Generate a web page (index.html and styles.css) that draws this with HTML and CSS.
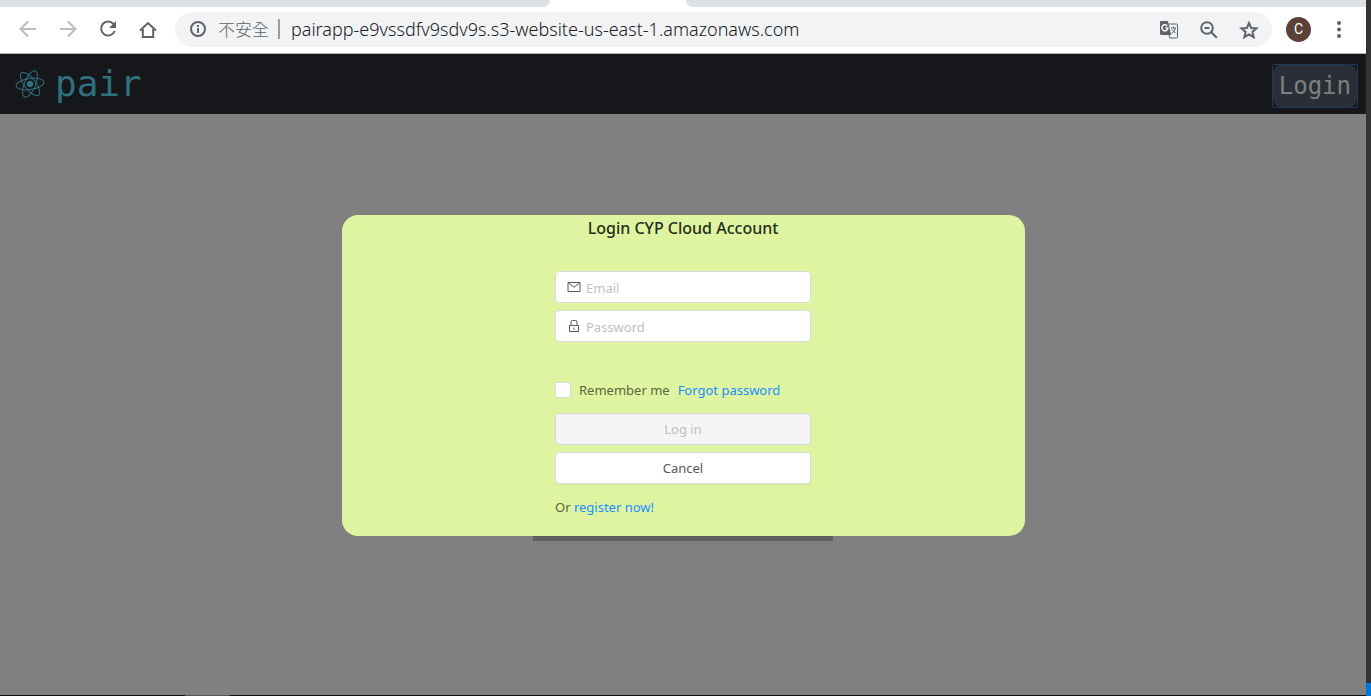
FILE: index.html
```html
<!DOCTYPE html>
<html lang="en">
<head>
<meta charset="utf-8">
<meta name="viewport" content="width=device-width, initial-scale=1">
<title>pair</title>
<link rel="stylesheet" href="styles.css">
</head>
<body>
<div class="window">
  <div class="tabstrip"><div class="tabs-left"></div><div class="tab-active"></div><div class="tabs-right"></div></div>
  <div class="toolbar">
    <nav class="nav-buttons" aria-label="Browser navigation">
      <button class="icon-button off" type="button" aria-label="Back" disabled><svg viewBox="0 0 20 20"><path d="M18 10H3M10 2.500L2.500 10l7.500 7.500"/></svg></button>
      <button class="icon-button off" type="button" aria-label="Forward" disabled><svg viewBox="0 0 20 20"><path d="M2 10h15M10 2.500L17.500 10 10 17.500"/></svg></button>
      <button class="icon-button" type="button" aria-label="Reload"><svg viewBox="0 0 20 20"><path d="M15.500 5A7 7 0 1 0 16.700 12"/><path class="solid" d="M18 2v7h-7z"/></svg></button>
      <button class="icon-button" type="button" aria-label="Home"><svg viewBox="0 0 20 20"><path d="M2 11.500L10 4l8 7.500M4.800 10v8h10.400v-8"/></svg></button>
    </nav>
    <div class="omnibox">
      <svg class="info" viewBox="0 0 20 20"><circle cx="10" cy="10" r="7"/><path d="M10 9v5M10 6v2"/></svg>
      <span class="unsafe" lang="zh-TW">不安全</span>
      <input class="address" type="text" aria-label="Address" value="pairapp-e9vssdfv9sdv9s.s3-website-us-east-1.amazonaws.com">
      <div class="page-actions">
        <button class="icon-button" type="button" aria-label="Translate"><svg viewBox="0 0 20 20"><path class="solid" d="M2 2h7l3.200 14H2.500Q1 16 1 14.500V3Q1 2 2 2z"/><path class="thin" d="M10 5h7.500q1 0 1 1v12q0 1-1 1H11l-1-3M12 9h5M14.500 7.500V9M16.500 9q-.7 3.500-4 5.500M13 10.500l4 4"/><path class="translate-g" d="M8.300 7A3 3 0 1 0 8.700 10V9H6.300"/></svg></button>
        <button class="icon-button" type="button" aria-label="Zoom"><svg viewBox="0 0 20 20"><circle cx="8" cy="9" r="5.800"/><path d="M5.500 9h5M12.300 13.300l5.500 5.500"/></svg></button>
        <button class="icon-button" type="button" aria-label="Bookmark"><svg viewBox="0 0 20 20"><path d="M10 4l2.100 5 5.400.4-4.100 3.500 1.300 5.300L10 15.400l-4.700 2.800 1.300-5.300-4.100-3.500 5.400-.4z"/></svg></button>
      </div>
    </div>
    <button class="avatar" type="button">C</button>
    <button class="icon-button" type="button" aria-label="Menu"><svg viewBox="0 0 20 20"><circle class="solid" cx="10" cy="4" r="2"/><circle class="solid" cx="10" cy="10.500" r="2"/><circle class="solid" cx="10" cy="17" r="2"/></svg></button>
  </div>
  <header class="site-header">
    <a class="brand" href="#">
      <svg class="atom" viewBox="-15 -15 30 30"><g transform="rotate(-8)"><ellipse rx="14" ry="5.600"/><ellipse rx="14" ry="5.600" transform="rotate(60)"/><ellipse rx="14" ry="5.600" transform="rotate(120)"/></g><circle r="2.800"/></svg>
      <span>pair</span>
    </a>
    <button class="login-button" type="button"><span>Login</span></button>
  </header>
  <main class="backdrop">
    <section class="dialog" role="dialog" aria-labelledby="dialog-title">
      <h1 class="dialog-title" id="dialog-title">Login CYP Cloud Account</h1>
      <form class="login-form">
        <div class="field">
          <svg viewBox="0 0 14 14"><path d="M1 2.500h12v9H1zM1.500 3L7 7.200 12.500 3"/></svg>
          <input type="email" aria-label="Email" placeholder="Email">
        </div>
        <div class="field">
          <svg viewBox="0 0 14 14"><path d="M2.500 6.500h9v6h-9zM4 6.500V3q0-1.500 1.500-1.500h3Q10 1.500 10 3v3.500M7 8.500v2.300"/></svg>
          <input type="password" aria-label="Password" placeholder="Password">
        </div>
        <div class="options">
          <input class="check" id="remember" type="checkbox">
          <label for="remember">Remember me</label>
          <a href="#">Forgot password</a>
        </div>
        <button class="form-button" type="submit" disabled>Log in</button>
        <button class="form-button" type="button">Cancel</button>
        <p class="register">Or <a href="#">register now!</a></p>
      </form>
    </section>
    <div class="panel-edge"></div>
  </main>
</div>
<div class="side"><div class="side-accent"></div></div>
<div class="bottom"><div class="bottom-mark"></div></div>
</body>
</html>
```
FILE: styles.css
```css
* { box-sizing: border-box; }
body {
  margin: 0;
  min-height: 100vh;
  display: grid;
  grid-template-columns: minmax(0, 1fr) 5px;
  grid-template-rows: 1fr 1px;
  background: #808080;
  font-family: "Noto Sans", "Noto Sans CJK TC", sans-serif;
}
button, input { font: inherit; }
button { cursor: pointer; }
a { color: #1890ff; text-decoration: none; }
svg { display: block; fill: none; }

.window { display: flex; flex-direction: column; }
.tabstrip { display: flex; height: 7px; background: #fff; }
.tabs-left, .tabs-right { background: #dee1e6; }
.tabs-left { width: 550px; border-bottom-right-radius: 7px; }
.tab-active { width: 136px; }
.tabs-right { flex: 1; border-bottom-left-radius: 7px; }

.toolbar {
  display: flex;
  align-items: center;
  height: 47px;
  padding: 0 17px 2px 18px;
  background: #fff;
  border-bottom: 1px solid #b6b4b6;
}
.nav-buttons { display: flex; gap: 20px; margin-right: 17px; }
.icon-button { padding: 0; border: 0; background: none; color: #5f6368; }
.icon-button.off { color: #babcbe; }
.icon-button svg, .info { width: 20px; height: 20px; stroke: currentColor; stroke-width: 2; }
.icon-button .solid { fill: currentColor; stroke: none; }
.icon-button .thin { stroke-width: 1; }
.icon-button .translate-g { stroke: #fff; stroke-width: 1.5; }
.omnibox {
  flex: 1;
  display: flex;
  align-items: center;
  height: 35px;
  padding: 0 13px;
  border-radius: 18px;
  background: #f1f3f4;
}
.info { color: #5f6368; }
.unsafe {
  margin-left: 10px;
  padding-right: 9px;
  border-right: 2px solid #9a9c9f;
  color: #5f6368;
  font-family: "Noto Sans CJK TC", sans-serif;
  font-size: 17px;
  font-weight: 300;
  line-height: 20px;
}
.address {
  flex: 1;
  min-width: 0;
  padding: 0 0 0 11px;
  border: 0;
  outline: 0;
  background: none;
  color: #202124;
  font-size: 18px;
  font-weight: 350;
}
.page-actions { display: flex; gap: 20px; }
.avatar {
  width: 25px;
  height: 25px;
  margin: 0 18px 0 14px;
  padding: 0;
  border: 0;
  border-radius: 50%;
  background: #5d4037;
  color: #fff;
  font-family: Roboto, sans-serif;
  font-size: 14px;
}

.site-header {
  display: flex;
  align-items: center;
  justify-content: space-between;
  height: 60px;
  padding: 0 8px 0 15px;
  background: #15171a;
  font-family: "DejaVu Sans Mono", monospace;
}
.brand { display: flex; align-items: center; gap: 10px; color: #30707f; font-size: 36px; line-height: 60px; }
.atom { width: 30px; height: 30px; stroke: #30707f; stroke-width: 1; }
.atom > circle { fill: #30707f; }
.login-button {
  margin-top: 3px;
  padding: 0;
  border: 1px solid #1f3862;
  border-radius: 2px;
  background: #15171a;
  color: #808080;
  font-size: 24px;
  line-height: 42px;
}
.login-button span { display: block; padding: 0 6px; border-radius: 8px; background: #2a2e37; }

.backdrop { flex: 1; display: flex; flex-direction: column; align-items: center; padding-top: 101px; }
.dialog {
  width: 50%;
  padding-bottom: 16px;
  border-radius: 16px;
  background: #dff4a1;
  color: #5b653f;
  font-size: 13px;
  line-height: 26px;
}
.dialog-title { margin: 0 0 30px; text-align: center; color: #252d1b; font-size: 16px; font-weight: 500; line-height: 26px; }
.login-form { width: 256px; margin: 0 auto; }
.field {
  display: flex;
  align-items: center;
  gap: 5px;
  height: 32px;
  margin-bottom: 7px;
  padding: 0 11px;
  border: 1px solid #d9d9d9;
  border-radius: 4px;
  background: #fff;
}
.field svg { width: 14px; height: 14px; stroke: #595959; }
.field input { flex: 1; min-width: 0; padding: 2px 0 0; border: 0; outline: 0; background: none; color: #595959; }
.field input::placeholder { color: #bfbfbf; }
.options { display: flex; align-items: center; height: 32px; margin: 32px 0 7px; }
.check { appearance: none; width: 16px; height: 16px; margin: 0 8px 0 0; border: 1px solid #d9d9d9; border-radius: 2px; background: #fff; }
.check:checked { background: #1890ff; }
.options label { margin-right: 8px; }
.form-button {
  display: block;
  width: 100%;
  height: 32px;
  margin-bottom: 7px;
  border: 1px solid #d9d9d9;
  border-radius: 4px;
  background: #fff;
  color: #595959;
  box-shadow: 0 2px 0 rgba(0, 0, 0, .02);
}
.form-button:disabled { background: #f5f5f5; color: #bfbfbf; box-shadow: none; }
.register { margin: 0; padding-top: 3px; }
.panel-edge { width: 300px; height: 5px; background: #5d6060; }

.side { display: flex; flex-direction: column; justify-content: flex-end; grid-row: 1 / 3; grid-column: 2; background: #333; }
.side-accent { height: 13px; background: #0078d7; }
.bottom { background: #101010; padding-left: 185px; }
.bottom-mark { width: 45px; height: 1px; background: #555; }
```
